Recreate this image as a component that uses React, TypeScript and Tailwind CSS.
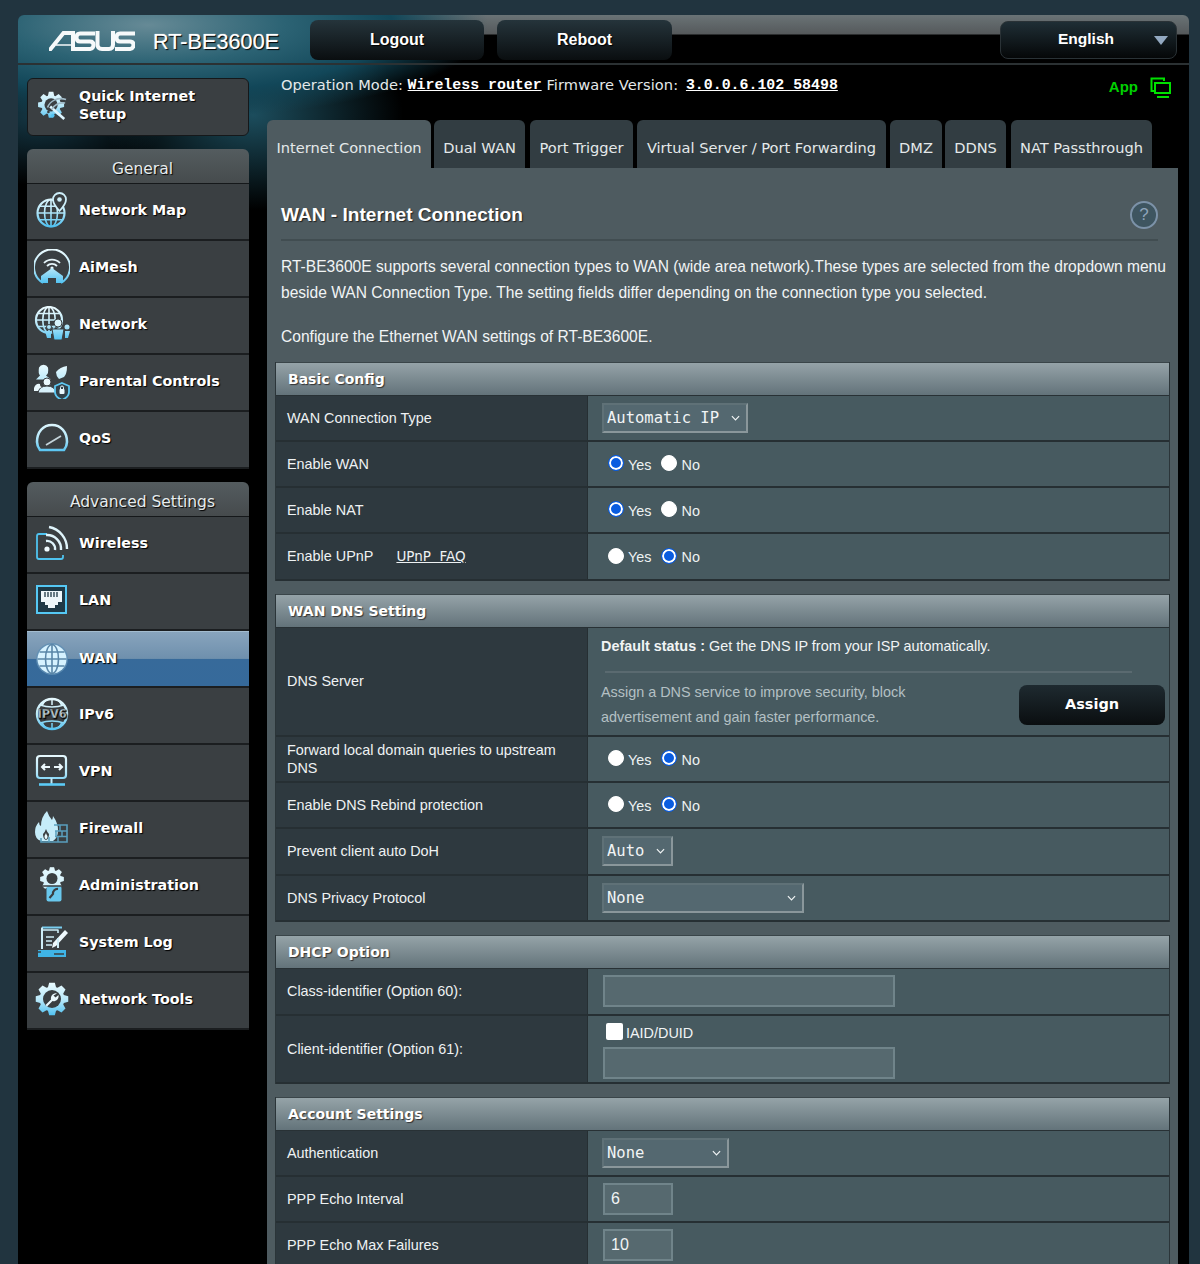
import React from "react";

const gearPath = (cx: number, cy: number, ro: number, ri: number, n: number) => {
  let d = "";
  const step = (Math.PI * 2) / n;
  for (let i = 0; i < n; i++) {
    const a = i * step - Math.PI / 2;
    const pts: [number, number][] = [
      [ri, a - step * 0.42],
      [ro, a - step * 0.22],
      [ro, a + step * 0.22],
      [ri, a + step * 0.42],
    ];
    pts.forEach(([r, t], j) => {
      const x = (cx + r * Math.cos(t)).toFixed(2);
      const y = (cy + r * Math.sin(t)).toFixed(2);
      d += (i === 0 && j === 0 ? "M" : "L") + x + " " + y;
    });
  }
  return d + "Z";
};

const S = { fill: "none", stroke: "url(#ig)", strokeWidth: 2 } as const;
const F = { fill: "url(#ig)" } as const;
const D = "#3a3f42";

const Globe = ({ cx, cy, r, w = 1.6 }: { cx: number; cy: number; r: number; w?: number }) => (
  <g {...S} strokeWidth={w}>
    <circle cx={cx} cy={cy} r={r} strokeWidth={w + 0.6} />
    <ellipse cx={cx} cy={cy} rx={r * 0.48} ry={r} />
    <path d={`M${cx} ${cy - r}V${cy + r}M${cx - r} ${cy}H${cx + r}M${cx - r * 0.85} ${cy - r * 0.5}H${cx + r * 0.85}M${cx - r * 0.85} ${cy + r * 0.5}H${cx + r * 0.85}`} />
  </g>
);

const Icon = ({ children }: { children: React.ReactNode }) => (
  <svg viewBox="0 0 36 36" className="h-[36px] w-[36px] shrink-0">{children}</svg>
);

const icons: Record<string, React.ReactNode> = {
  quick: (
    <g transform="translate(3 2) scale(.88)">
      <path d={gearPath(16, 18, 15, 11, 8)} {...F} />
      <circle cx="16" cy="18" r="7.5" fill={D} />
      <path d="M15 20 L31 34" stroke="#dff6ff" strokeWidth="3" />
      <path d="M12 21C15 13 24 9 33 12M17 23C20 18 25 15 32 16" fill="none" stroke="#9fb9c6" strokeWidth="1.8" />
      <circle cx="18" cy="30" r="2" fill="#54c4f2" />
      <circle cx="13" cy="26" r="1.5" fill={D} />
    </g>
  ),
  map: (
    <>
      <Globe cx={17} cy={21} r={13.5} />
      <path d="M25.500 1a6.500 6.500 0 0 0-6.500 6.500C19 12 25.500 19 25.500 19S32 12 32 7.500A6.500 6.500 0 0 0 25.500 1z" fill={D} stroke="#cdeffa" strokeWidth="1.800" />
      <circle cx="25.500" cy="7.500" r="2.300" fill="#cdeffa" />
    </>
  ),
  mesh: (
    <>
      <path d="M9 34A18 18 0 1 1 27 34" {...S} />
      <path d="M10 14A11 11 0 0 1 26 14M13 17A7 7 0 0 1 23 17" fill="none" stroke="#e6f5fa" strokeWidth="1.800" />
      <circle cx="18" cy="19" r="1.600" fill="#e6f5fa" />
      <path d="M18 19L29 27V34H22V29H14V34H7V27Z" {...F} />
    </>
  ),
  network: (
    <>
      <Globe cx={15} cy={14} r={13} />
      <circle cx="24" cy="17" r="4" fill="#d9f3fb" stroke={D} />
      <path d="M18 23h12l-2 11h-8z" {...F} stroke={D} />
      <circle cx="15" cy="21" r="2.500" {...F} stroke={D} />
      <circle cx="33" cy="21" r="2.500" {...F} />
      <path d="M11 25h6v7h-4zM31 25h5l-2 7h-3z" {...F} />
    </>
  ),
  parental: (
    <>
      <path d="M4 4.500a5 5 0 0 1 9 0q1 6-2 8l5 4H1l4-4q-2-2-1-8z" {...F} transform="translate(1 0)" />
      <path d="M22 9q4-5 11-6 0 8-3 11l-5 2q-3-3-3-7z" {...F} />
      <circle cx="13" cy="19" r="4" fill="#eaf8fd" stroke={D} />
      <path d="M4 30q1-7 9-7t9 7z" fill="#d7f0fa" stroke={D} />
      <path d="M0 25q2-5 6-4 0 3 2 3-3 1-4 4H0z" fill="#eaf8fd" />
      <path d="M28 20l7 3v6q0 5-7 8-7-3-7-8v-6z" fill="#31414a" stroke="#5ec8f2" strokeWidth="1.800" />
      <rect x="25.500" y="26" width="5" height="5" rx="1" fill="#eaf8fd" />
      <path d="M26.500 26v-1.500a1.500 1.500 0 0 1 3 0V26" fill="none" stroke="#eaf8fd" />
    </>
  ),
  qos: (
    <g transform="translate(0 -2)">
      <path d="M6 32Q3 28 3 24C3 14 9 7 18 7s15 7 15 17q0 4-3 8z" fill="none" stroke="url(#ig)" strokeWidth="2.600" />
      <path d="M12 27L27 18" stroke="#c4d4da" strokeWidth="1.800" />
    </g>
  ),
  wireless: (
    <>
      <path d="M13 9H5q-2 0-2 2v21q0 2 2 2h22q2 0 2-2v-2" fill="none" stroke="#4fc3ef" strokeWidth="1.800" />
      <circle cx="13" cy="24" r="2.600" fill="#f0fbff" />
      <path d="M12 16A8 8 0 0 1 21 25M12 10A14 14 0 0 1 27 25M15 2A22 22 0 0 1 33 24" fill="none" stroke="#dff4fb" strokeWidth="2.400" />
    </>
  ),
  lan: (
    <>
      <rect x="3" y="4" width="29" height="27" fill="#1f3946" stroke="#55c8f4" strokeWidth="2" />
      <path d="M7 9h21v11h-4v3h-3v3h-7v-3h-3v-3H7z" fill="#eef7fa" />
      <path d="M11 10v5M14 10v5M17 10v5M20 10v5M23 10v5" stroke="#1f3946" strokeWidth="1.300" />
    </>
  ),
  wan: (
    <>
      <circle cx="18" cy="19" r="16" fill="#5f8fb4" opacity="0.8" />
      <circle cx="18" cy="19" r="14.500" fill="#d6f2ff" />
      <g fill="none" stroke="#5a86a8" strokeWidth="1.600">
        <ellipse cx="18" cy="19" rx="6.500" ry="14.500" />
        <path d="M18 4.500V33.500M3.500 19H32.500M5.500 12H30.500M5.500 26H30.500" />
      </g>
    </>
  ),
  ipv6: (
    <>
      <circle cx="18" cy="18" r="15" fill="none" stroke="url(#ig)" strokeWidth="2.400" />
      <path d="M6 9Q18 13 30 9M6 27Q18 23 30 27M18 3V9M18 27V33M12 4Q9 7 8 10M24 4Q27 7 28 10M12 32Q9 29 8 26M24 32Q27 29 28 26" fill="none" stroke="url(#ig)" strokeWidth="1.500" />
      <text x="18" y="22" textAnchor="middle" fontFamily="'DejaVu Sans'" fontWeight="700" fontSize="11.500" fill="#d5e8f0" stroke="#33393c" strokeWidth="0.300" textLength="29" lengthAdjust="spacingAndGlyphs">IPV6</text>
    </>
  ),
  vpn: (
    <>
      <rect x="3" y="3" width="29" height="22" rx="3" fill="none" stroke="url(#ig)" strokeWidth="2.200" />
      <path d="M8 14h8M28 14h-8M11 11l-3 3 3 3M25 11l3 3-3 3" fill="none" stroke="#edf9fd" strokeWidth="2" />
      <path d="M17.500 25v6" stroke="#bfe9f7" strokeWidth="2" />
      <path d="M5 31.500H31" stroke="#5bcbf6" strokeWidth="2.600" />
    </>
  ),
  fire: (
    <>
      <path d="M13 1Q15 7 18 10q1-2 1-4 5 7 5 14 0 8-5 11H7Q1 29 1 22q0-6 4-10 0 3 2 4 0-9 6-15z" fill="#c6ecf9" />
      <path d="M12 19q-1 3-3 5 0 5 3 6 3-1 3-6-2-2-3-5z" fill={D} />
      <path d="M12 23q-1 2-1.500 3 0 3 1.500 3t1.500-3q-1-1-1.500-3z" fill="#e8fbff" />
      <path d="M20 16H33V33H7V29" fill="none" stroke="#5a9fbd" strokeWidth="1.600" transform="translate(0 -1)" />
      <path d="M21 21H33M21 26.500H33M26 15V21M22 21V27M28 21V27M15 27V32M24 27V32" stroke="#5a9fbd" strokeWidth="1.500" />
    </>
  ),
  admin: (
    <>
      <path d={gearPath(18, 12, 12, 9, 8)} fill="#dff6fd" />
      <path d={gearPath(18, 12, 12, 9, 8)} fill="url(#ig)" opacity="0.3" />
      <circle cx="18" cy="11.500" r="5.500" fill={D} />
      <rect x="12.500" y="19" width="15" height="15.500" rx="2" fill="#69c8ed" />
      <path d="M24 22a4.500 4.500 0 0 0-5 5l-3.500 4" fill="none" stroke={D} strokeWidth="2.200" />
      <path d="M7 19H29" stroke={D} strokeWidth="1.500" />
    </>
  ),
  log: (
    <>
      <path d="M8 3.500H28" stroke="#79cdee" strokeWidth="2" />
      <path d="M8 3.500V25" stroke="#cfeef8" strokeWidth="2" />
      <path d="M24 5.500V9M9 6H24" stroke="#cfeef8" strokeWidth="1.600" />
      <path d="M12 13h8M12 17h6M12 21h6" stroke="#cfeef8" strokeWidth="1.600" />
      <path d="M18 24l1-5L31 6l3 3-12 13z" fill="#eef9fd" />
      <path d="M24 14v10" stroke="#cfeef8" strokeWidth="2" />
      <path d="M4 26h28v7H4z" fill="#3fb4e6" />
      <path d="M3 28h4M20 30h10" stroke={D} strokeWidth="1.400" />
    </>
  ),
  tools: (
    <>
      <path d={gearPath(18, 18, 16.500, 12.500, 8)} {...F} />
      <circle cx="18" cy="18" r="9" fill={D} />
      <path d="M23 12.500a5 5 0 0 0-6 6L11.500 24l1.500 1.500 5.500-5.500a5 5 0 0 0 6-6l-3 2.500-2-2z" fill="#eaf8fd" />
    </>
  ),
};

const groupA: [string, string][] = [
  ["map", "Network Map"],
  ["mesh", "AiMesh"],
  ["network", "Network"],
  ["parental", "Parental Controls"],
  ["qos", "QoS"],
];
const groupB: [string, string][] = [
  ["wireless", "Wireless"],
  ["lan", "LAN"],
  ["wan", "WAN"],
  ["ipv6", "IPv6"],
  ["vpn", "VPN"],
  ["fire", "Firewall"],
  ["admin", "Administration"],
  ["log", "System Log"],
  ["tools", "Network Tools"],
];

const NavItem = ({ icon, label }: { icon: string; label: string }) => {
  const active = label === "WAN";
  return (
    <div
      className={`flex h-[57px] items-center gap-[9px] border-b-2 border-[#1b1e20] pb-[3px] pl-[7px] font-['DejaVu_Sans'] text-[14.3px] leading-[18px] font-bold text-white [text-shadow:1px_1px_1px_#000] ${
        active
          ? "border-t border-t-[#a3bccf] bg-[linear-gradient(180deg,#88a4bd_0,#6f90ad_49%,#376a9a_50%,#366a9b_100%)]"
          : "bg-[#3a3f42]"
      }`}
    >
      <Icon>{icons[icon]}</Icon>
      <span>{label}</span>
    </div>
  );
};

const GroupHead = ({ label }: { label: string }) => (
  <div className="flex h-[35px] items-center justify-center rounded-t-md border-b border-[#15181a] bg-[linear-gradient(180deg,#545c5f,#464b4d)] pt-[7px] pl-[9px] font-['DejaVu_Sans'] text-[15.5px] text-[#e6ecee] [text-shadow:1px_1px_1px_#000]">
    {label}
  </div>
);

const TopButton = ({ label, w }: { label: string; w: string }) => (
  <button className={`flex h-[40px] items-center justify-center rounded-lg bg-[linear-gradient(180deg,#25343b,#0a0e10)] font-['Liberation_Sans'] text-[16px] font-bold text-white [text-shadow:1px_1px_1px_#000] ${w}`}>
    {label}
  </button>
);

const tabs: [string, string][] = [
  ["Internet Connection", "w-[164px] mr-[3px]"],
  ["Dual WAN", "w-[91px] mr-[5px]"],
  ["Port Trigger", "w-[103px] mr-[4px]"],
  ["Virtual Server / Port Forwarding", "w-[249px] mr-[4px]"],
  ["DMZ", "w-[52px] mr-[3px]"],
  ["DDNS", "w-[61px] mr-[5px]"],
  ["NAT Passthrough", "w-[141px]"],
];

const Radio = ({ on, label }: { on?: boolean; label: string }) => (
  <label className="flex items-center gap-[4px]">
    <input
      type="radio"
      readOnly
      checked={!!on}
      className="h-[16px] w-[16px] appearance-none rounded-full border-[1.5px] border-white bg-white checked:border-[#0a5ce0] checked:bg-[#0a5ce0] checked:shadow-[inset_0_0_0_2px_#fff]"
    />
    <span className="mt-[4px]">{label}</span>
  </label>
);

const YesNo = ({ yes }: { yes: boolean }) => (
  <div className="flex items-center gap-[10px] pl-[20px] text-[14.4px] text-[#eef2f3]">
    <Radio on={yes} label="Yes" />
    <Radio on={!yes} label="No" />
  </div>
);

const Sel = ({ value, w }: { value: string; w: string }) => (
  <div className={`relative ml-[14px] h-[30px] ${w}`}>
    <select
      defaultValue={value}
      className="h-full w-full appearance-none border-2 border-t-[#5f7177] border-r-[#8a979b] border-b-[#8a979b] border-l-[#5f7177] bg-[#546870] pt-[2px] pl-[3px] font-['DejaVu_Sans_Mono'] text-[15.5px] text-[#f1f4f5] outline-none"
    >
      <option>{value}</option>
    </select>
    <svg viewBox="0 0 10 6" className="pointer-events-none absolute top-[12px] right-[8px] h-[6px] w-[9px]" fill="none" stroke="#f1f4f5" strokeWidth="1.300">
      <path d="M1 1l4 4 4-4" />
    </svg>
  </div>
);

const Field = ({ value, w }: { value?: string; w: string }) => (
  <input
    readOnly
    value={value ?? ""}
    className={`ml-[15px] block h-[32px] border-2 border-[#70848a] bg-[#56696f] pl-[6px] font-['Liberation_Sans'] text-[16px] text-[#f1f4f5] outline-none ${w}`}
  />
);

const Row = ({ h, label, children }: { h: string; label: React.ReactNode; children: React.ReactNode }) => (
  <div className={`flex border-b-2 border-[#262f33] ${h}`}>
    <div className="flex w-[312px] shrink-0 items-center border-r border-[#262f33] bg-[#2e393f] pr-[20px] pl-[11px] text-[14.4px] leading-[18px] text-[#eef2f3]">
      {label}
    </div>
    <div className="flex min-w-0 flex-1 items-center bg-[#475a60]">{children}</div>
  </div>
);

const Section = ({ title, children }: { title: string; children: React.ReactNode }) => (
  <section className="mb-[13px] border-x border-[#2b3539]">
    <div className="flex h-[34px] items-center border-y border-[#3a4549] border-b-[#283135] bg-[linear-gradient(180deg,#95a3a8,#63737a)] pt-[1px] pl-[12px] font-['DejaVu_Sans'] text-[14px] font-bold text-white [text-shadow:1px_1px_1px_#333]">
      {title}
    </div>
    {children}
  </section>
);

export default function App() {
  return (
    <div className="h-[1264px] w-[1200px] overflow-hidden bg-[#21343f] pt-[15px] pl-[18px] font-['Liberation_Sans',sans-serif]">
      <svg className="absolute h-0 w-0">
        <defs>
          <linearGradient id="ig" gradientUnits="userSpaceOnUse" x1="0" y1="2" x2="0" y2="36">
            <stop offset="0" stopColor="#e8faff" />
            <stop offset="0.5" stopColor="#b8e8f9" />
            <stop offset="1" stopColor="#45bdf0" />
          </linearGradient>
        </defs>
      </svg>
      <div className="h-[1249px] w-[1171px] overflow-hidden rounded-t-md bg-black bg-[radial-gradient(ellipse_340px_95px_at_130px_10px,#668a96_0,#2c6374_40%,#124759_72%,transparent_100%),linear-gradient(180deg,#6a7376_0,#55595b_19px,transparent_20px),radial-gradient(ellipse_150px_95px_at_235px_100px,#1c4d5d,transparent),radial-gradient(ellipse_130px_70px_at_20px_100px,#153846,transparent)]">
        <header className="relative flex h-[50px] items-start border-b-2 border-[#2b3133]">
          <div className="flex h-[48px] w-[292px] shrink-0 items-center pt-[3px] pl-[31px]">
            <svg viewBox="0 0 86 20" className="h-[20px] w-[86px] shrink-0">
              <g fill="none" stroke="#f6f9fa" strokeWidth="4">
                <path d="M0 20L14.500 2H24V20" />
                <path d="M7 14H22" strokeWidth="1.500" />
                <path d="M46 2.500H31Q27.500 2.500 27.500 6.500T31 10.500H41Q44.500 10.500 44.500 14T41 18H26" />
                <path d="M48.500 0V13.500Q48.500 18 53 18H60Q64 18 64 13.500V0" />
                <path d="M86 2.500H71Q67.500 2.500 67.500 6.500T71 10.500H81Q84.500 10.500 84.500 14T81 18H66" />
              </g>
            </svg>
            <span className="mt-[4px] ml-[18px] text-[21.7px] whitespace-nowrap text-white [text-shadow:1px_1px_1px_#000,0_0_1px_#fff]">RT-BE3600E</span>
          </div>
          <div className="mt-[5px] flex gap-[13px]">
            <TopButton label="Logout" w="w-[174px]" />
            <TopButton label="Reboot" w="w-[175px]" />
          </div>
          <div className="relative mt-[6px] mr-[12px] ml-auto flex h-[38px] w-[177px] items-center justify-center rounded-lg border border-[#2a3236] bg-[linear-gradient(180deg,#1f2e35,#050708)] pr-[5px] pb-[2px] text-[15.5px] font-bold text-white">
            English
            <span className="absolute top-[14px] right-[8px] h-0 w-0 border-x-[7px] border-t-[9px] border-x-transparent border-t-[#93a9c1]" />
          </div>
        </header>

        <div className="flex">
          <aside className="w-[249px] shrink-0 pr-[18px] pl-[9px]">
            <div className="mt-[13px] flex h-[58px] items-center gap-[9px] rounded-md border border-[#15181a] bg-[#3a3f42] pb-[5px] pl-[6px] font-['DejaVu_Sans'] text-[14.3px] leading-[18px] font-bold text-white [text-shadow:1px_1px_1px_#000]">
              <Icon>{icons.quick}</Icon>
              <span>
                Quick Internet
                <br />
                Setup
              </span>
            </div>
            <div className="mt-[13px]">
              <GroupHead label="General" />
              {groupA.map(([i, l]) => (
                <NavItem key={l} icon={i} label={l} />
              ))}
            </div>
            <div className="mt-[13px]">
              <GroupHead label="Advanced Settings" />
              {groupB.map(([i, l]) => (
                <NavItem key={l} icon={i} label={l} />
              ))}
            </div>
          </aside>

          <main className="w-[911px] shrink-0">
            <div className="flex h-[55px] items-start pt-[11px] pr-[6px] pl-[14px] font-['DejaVu_Sans'] text-[14.6px] leading-[18px] text-[#e4e9ea]">
              <span>Operation Mode:&nbsp;</span>
              <span className="font-['Liberation_Mono'] text-[14.9px] font-bold text-white underline">Wireless router</span>
              <span className="tracking-[0.1px]">&nbsp;Firmware Version:&nbsp;</span>
              <span className="ml-[3px] font-['Liberation_Mono'] text-[14.9px] font-bold text-white underline">3.0.0.6.102_58498</span>
              <span className="mt-[2px] ml-auto font-['Liberation_Sans'] text-[15px] font-bold text-[#00d000]">App</span>
              <svg viewBox="0 0 22 22" className="mt-[1px] ml-[12px] h-[22px] w-[22px]" fill="none" stroke="#00e000" strokeWidth="2">
                <path d="M4 14H1.500V1.500H14V4" />
                <rect x="5" y="6" width="15" height="10" />
                <path d="M7 20H19" />
              </svg>
            </div>

            <div className="flex h-[48px] font-['DejaVu_Sans'] text-[14.6px] text-[#e4e9ea]">
              {tabs.map(([t, c], i) => (
                <div key={t} className={`flex items-center justify-center rounded-t-md pt-[7px] whitespace-nowrap ${i === 0 ? "bg-[#4e5b60]" : "bg-[#323d42]"} ${c}`}>
                  {t}
                </div>
              ))}
            </div>

            <div className="bg-[#4e5b60] px-[8px] text-[#f1f4f5]">
              <div className="mr-[12px] ml-[6px] flex h-[73px] items-center justify-between border-b-2 border-[#414d51] pt-[23px]">
                <h1 className="text-[19.1px] font-bold text-white [text-shadow:1px_1px_1px_#222]">WAN - Internet Connection</h1>
                <span className="flex h-[28px] w-[28px] items-center justify-center rounded-full border-2 border-[#7c92a8] bg-[#3e5560] text-[17px] text-[#8ea4ba]">?</span>
              </div>
              <p className="mt-[13px] mr-[2px] ml-[6px] text-[15.58px] leading-[25.5px]">
                RT-BE3600E supports several connection types to WAN (wide area network).These types are selected from the dropdown menu beside WAN Connection Type. The setting fields differ depending on the connection type you selected.
              </p>
              <p className="mx-[6px] mt-[19px] mb-[12px] text-[15.58px] leading-[25.5px]">Configure the Ethernet WAN settings of RT-BE3600E.</p>

              <Section title="Basic Config">
                <Row h="h-[46px]" label="WAN Connection Type"><Sel value="Automatic IP" w="w-[146px]" /></Row>
                <Row h="h-[46px]" label="Enable WAN"><YesNo yes /></Row>
                <Row h="h-[46px]" label="Enable NAT"><YesNo yes /></Row>
                <Row
                  h="h-[47px]"
                  label={
                    <>
                      Enable UPnP
                      <span className="ml-[23px] font-['DejaVu_Sans'] text-[13.5px] underline">UPnP&nbsp; FAQ</span>
                    </>
                  }
                >
                  <YesNo yes={false} />
                </Row>
              </Section>

              <Section title="WAN DNS Setting">
                <Row h="h-[109px]" label="DNS Server">
                  <div className="w-full pt-[4px] pr-[4px] pl-[13px] text-[14.4px]">
                    <div className="h-[18px]"><b>Default status :</b> Get the DNS IP from your ISP automatically.</div>
                    <div className="mt-[17px] mr-[33px] ml-[4px] border-t-2 border-[#5a6a70]" />
                    <div className="mt-[7px] flex items-center justify-between">
                      <div className="leading-[25.5px] text-[#b4c0c4]">
                        Assign a DNS service to improve security, block
                        <br />
                        advertisement and gain faster performance.
                      </div>
                      <button className="flex h-[40px] w-[146px] items-center justify-center rounded-lg bg-[linear-gradient(180deg,#1e2a30,#0a0e10)] font-['DejaVu_Sans'] text-[14.5px] font-bold text-white">Assign</button>
                    </div>
                  </div>
                </Row>
                <Row h="h-[46px]" label={<span>Forward local domain queries to upstream DNS</span>}><YesNo yes={false} /></Row>
                <Row h="h-[46px]" label="Enable DNS Rebind protection"><YesNo yes={false} /></Row>
                <Row h="h-[47px]" label="Prevent client auto DoH"><Sel value="Auto" w="w-[71px]" /></Row>
                <Row h="h-[46px]" label="DNS Privacy Protocol"><Sel value="None" w="w-[202px]" /></Row>
              </Section>

              <Section title="DHCP Option">
                <Row h="h-[47px]" label="Class-identifier (Option 60):"><Field w="w-[292px]" /></Row>
                <Row h="h-[68px]" label="Client-identifier (Option 61):">
                  <div className="mt-[4px]">
                    <label className="ml-[18px] flex h-[18px] items-center gap-[3px] text-[14.4px]">
                      <input type="checkbox" readOnly className="h-[17px] w-[17px] appearance-none rounded-[2px] bg-white" />
                      <span className="mt-[4px]">IAID/DUID</span>
                    </label>
                    <Field w="mt-[6px] w-[292px]" />
                  </div>
                </Row>
              </Section>

              <Section title="Account Settings">
                <Row h="h-[46px]" label="Authentication"><Sel value="None" w="w-[127px]" /></Row>
                <Row h="h-[46px]" label="PPP Echo Interval"><Field value="6" w="w-[70px]" /></Row>
                <Row h="h-[46px]" label="PPP Echo Max Failures"><Field value="10" w="w-[70px]" /></Row>
              </Section>
            </div>
          </main>
        </div>
      </div>
    </div>
  );
}
